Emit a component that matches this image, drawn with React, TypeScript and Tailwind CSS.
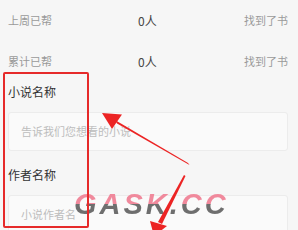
import React from "react";

const stats = [
  { label: "上周已帮", value: "0人", tail: "找到了书" },
  { label: "累计已帮", value: "0人", tail: "找到了书" },
];

function Field({ title, placeholder }: { title: string; placeholder: string }) {
  return (
    <div className="flex flex-col">
      <div className="h-[18px] flex items-center text-[12px] text-[#333]">{title}</div>
      <div className="mt-[11px] h-[39px] rounded-[3px] border border-[#ececec] bg-[#fafafa] flex items-center pl-[12px] text-[11px] text-[#bdbdbd]">
        {placeholder}
      </div>
    </div>
  );
}

export default function App() {
  return (
    <div
      className="relative w-[298px] h-[230px] overflow-hidden bg-[#f6f6f6]"
      style={{ fontFamily: '"Noto Sans CJK SC", "Noto Sans", sans-serif' }}
    >
      <div className="pl-[8px] pr-[10px] flex flex-col">
        {stats.map((s) => (
          <div key={s.label} className="h-[41px] flex items-center text-[11px]">
            <span className="w-[130px] text-[#9a9a9a]">{s.label}</span>
            <span className="flex-1 text-[12px] text-[#444]">{s.value}</span>
            <span className="text-[#9a9a9a]">{s.tail}</span>
          </div>
        ))}
        <div className="h-[1px]" />
        <Field title="小说名称" placeholder="告诉我们您想看的小说" />
        <div className="h-[15px]" />
        <Field title="作者名称" placeholder="小说作者名" />
      </div>

      {/* watermark */}
      <div
        className="absolute left-[74px] top-[190px] text-[29px] leading-none font-black italic tracking-[3px] bg-linear-to-b from-[#f0899c] from-50% to-[#6e6e6e] to-50% bg-clip-text text-transparent"
        style={{ fontFamily: '"Liberation Sans", sans-serif' }}
      >
        GASK.CC
      </div>

      {/* red annotation box */}
      <div className="absolute left-[3px] top-[72px] w-[86px] h-[156px] border-2 border-[#e62a2a] rounded-[2px]" />

      {/* arrows */}
      <svg className="absolute inset-0" width="298" height="230" viewBox="0 0 298 230">
        <polygon points="188,163 189.5,165 117,123.5 115,120" fill="#ec2424" />
        <polygon points="102,113 122,114.5 112,129" fill="#ec2424" />
        <polygon points="184,175 185.5,176 162,224 158,222" fill="#ec2424" />
        <polygon points="154,236 150,221 167,226" fill="#ec2424" />
      </svg>
    </div>
  );
}
